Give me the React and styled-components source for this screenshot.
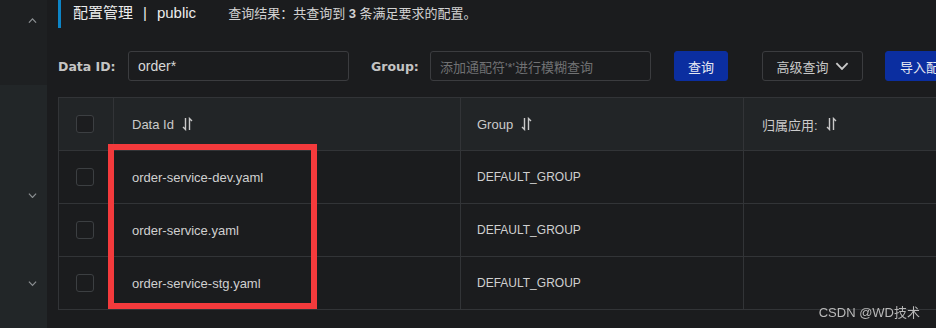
import { Fragment } from 'react';
import styled, { createGlobalStyle } from 'styled-components';

const GlobalStyle = createGlobalStyle`
    html, body {
        margin: 0;
        padding: 0;
        background: #1b1c1e;
        overflow: hidden;
    }
    body {
        font-family: "Liberation Sans", "Noto Sans CJK SC", sans-serif;
    }
`

const Page = styled.div`
    display: flex;
    width: 936px;
    height: 328px;
    background: #1b1c1e;
    overflow: hidden;
`

const Sidebar = styled.div`
    width: 47px;
    flex: none;
    display: flex;
    flex-direction: column;
`

const SideTop = styled.div`
    height: 85px;
    background: #1e2022;
    display: flex;
    justify-content: flex-end;
    align-items: flex-start;
    padding: 18px 10px 0 0;
    box-sizing: border-box;
`

const SideMenu = styled.div`
    flex: 1;
    background: #222628;
    display: flex;
    flex-direction: column;
    align-items: flex-end;
    gap: 83px;
    padding: 108px 10px 0 0;
`

const Main = styled.div`
    flex: 1;
    min-width: 0;
    padding-left: 11px;
    overflow: hidden;
`

const Header = styled.div`
    height: 28px;
    display: flex;
    align-items: flex-start;
    border-left: 3px solid #0d84c6;
    padding-left: 12px;
    box-sizing: border-box;
`

const Title = styled.h1`
    margin: 4px 0 0;
    font-size: 15px;
    font-weight: normal;
    color: #ececec;
    line-height: 18px;
    white-space: nowrap;
`

const Sep = styled.span`
    margin: 0 10px;
`

const Summary = styled.span`
    margin: 6px 0 0 32px;
    font-size: 13px;
    color: #d2d2d2;
    line-height: 16px;
    white-space: nowrap;

    b {
        font-weight: bold;
    }
`

const FilterRow = styled.div`
    display: flex;
    align-items: center;
    height: 30px;
    margin-top: 23px;
    white-space: nowrap;
`

const Label = styled.label`
    width: ${p => p.w}px;
    flex: none;
    font-family: "DejaVu Sans", sans-serif;
    font-weight: bold;
    font-size: 12.5px;
    color: #c4c4c4;
`

const Input = styled.div`
    width: 221px;
    height: 30px;
    box-sizing: border-box;
    border: 1px solid #3b3c3f;
    border-radius: 3px;
    display: flex;
    align-items: center;
    padding-left: 9px;
    font-size: ${p => p.hint ? 13 : 14}px;
    color: ${p => p.hint ? '#707173' : '#d8d8d8'};
    margin-right: ${p => p.mr || 0}px;
    flex: none;
`

const Button = styled.button`
    height: 30px;
    box-sizing: border-box;
    flex: none;
    width: ${p => p.w}px;
    margin-left: ${p => p.ml}px;
    border-radius: 3px;
    border: 1px solid ${p => p.primary ? '#0b2ea0' : '#3b3c3f'};
    background: ${p => p.primary ? '#0b2ea0' : 'transparent'};
    color: ${p => p.primary ? '#e6e9f2' : '#c8c8c8'};
    font-family: "Noto Sans CJK SC", sans-serif;
    font-size: 13px;
    display: flex;
    align-items: center;
    justify-content: ${p => p.left ? 'flex-start' : 'center'};
    padding: ${p => p.left ? '0 0 0 14px' : '0'};
    gap: 6px;
    white-space: nowrap;
    overflow: hidden;
`

const TableWrap = styled.div`
    position: relative;
    margin-top: 16px;
    width: 960px;
`

const Grid = styled.div`
    display: grid;
    grid-template-columns: 55px 347px 283px 275px;
    border-top: 1px solid #323437;
    border-left: 1px solid #323437;
`

const Cell = styled.div`
    height: 53px;
    box-sizing: border-box;
    border-right: 1px solid #323437;
    border-bottom: 1px solid #323437;
    background: ${p => p.head ? '#222527' : '#1b1c1e'};
    display: flex;
    align-items: center;
    justify-content: ${p => p.check ? 'center' : 'flex-start'};
    padding-left: ${p => p.check ? 0 : p.pl || 18}px;
    padding-right: ${p => p.check ? 2 : 0}px;
    font-size: ${p => p.small ? 12 : 13}px;
    color: ${p => p.head ? '#cbcbcb' : '#d0d0d0'};
    white-space: nowrap;
    gap: 8px;
`

const Box = styled.span`
    width: 18px;
    height: 18px;
    box-sizing: border-box;
    border: 1px solid #3c3f42;
    border-radius: 3px;
    background: ${p => p.head ? '#1c1d1f' : 'transparent'};
`

const Mark = styled.div`
    position: absolute;
    left: 50px;
    top: 47px;
    width: 209px;
    height: 165px;
    box-sizing: border-box;
    border: 6px solid #f43a3c;
    pointer-events: none;
`

const Watermark = styled.div`
    position: fixed;
    right: 16px;
    bottom: 7px;
    font-family: "Liberation Sans", "Noto Sans CJK SC", sans-serif;
    font-size: 13px;
    color: #b9b9b9;
`

const Chevron = ({ up, size = 9, color = '#8b8f92' }) => (
    <svg width={size} height={size * 0.6} viewBox="0 0 10 6" fill="none">
        <path d={up ? 'M1 5.2 L5 1 L9 5.2' : 'M1 0.8 L5 5 L9 0.8'} stroke={color} strokeWidth="1.3" />
    </svg>
)

const SortIcon = () => (
    <svg width="11" height="14" viewBox="0 0 11 14" fill="none" stroke="#c9c9c9" strokeWidth="1.4">
        <path d="M3.5 1 V12.5 L1 10" />
        <path d="M7.5 13 V1.5 L10 4" />
    </svg>
)

const rows = [
    'order-service-dev.yaml',
    'order-service.yaml',
    'order-service-stg.yaml',
]

const App = () => {
    return (
        <>
            <GlobalStyle />
            <Page>
                <Sidebar>
                    <SideTop><Chevron up /></SideTop>
                    <SideMenu>
                        <Chevron />
                        <Chevron />
                    </SideMenu>
                </Sidebar>
                <Main>
                    <Header>
                        <Title>配置管理<Sep>|</Sep>public</Title>
                        <Summary>查询结果：共查询到 <b>3</b> 条满足要求的配置。</Summary>
                    </Header>
                    <FilterRow>
                        <Label w={70}>Data ID:</Label>
                        <Input mr={22}>order*</Input>
                        <Label w={59}>Group:</Label>
                        <Input hint>添加通配符'*'进行模糊查询</Input>
                        <Button primary w={54} ml={23}>查询</Button>
                        <Button w={101} ml={34}>高级查询 <Chevron size={14} color="#c8c8c8" /></Button>
                        <Button primary left w={80} ml={22}>导入配置</Button>
                    </FilterRow>
                    <TableWrap>
                        <Grid>
                            <Cell head check><Box head /></Cell>
                            <Cell head>Data Id <SortIcon /></Cell>
                            <Cell head pl={16}>Group <SortIcon /></Cell>
                            <Cell head>归属应用: <SortIcon /></Cell>
                            {rows.map(name => (
                                <Fragment key={name}>
                                    <Cell check><Box /></Cell>
                                    <Cell>{name}</Cell>
                                    <Cell small pl={16}>DEFAULT_GROUP</Cell>
                                    <Cell />
                                </Fragment>
                            ))}
                        </Grid>
                        <Mark />
                    </TableWrap>
                </Main>
            </Page>
            <Watermark>CSDN @WD技术</Watermark>
        </>
    )
}

export default App;
